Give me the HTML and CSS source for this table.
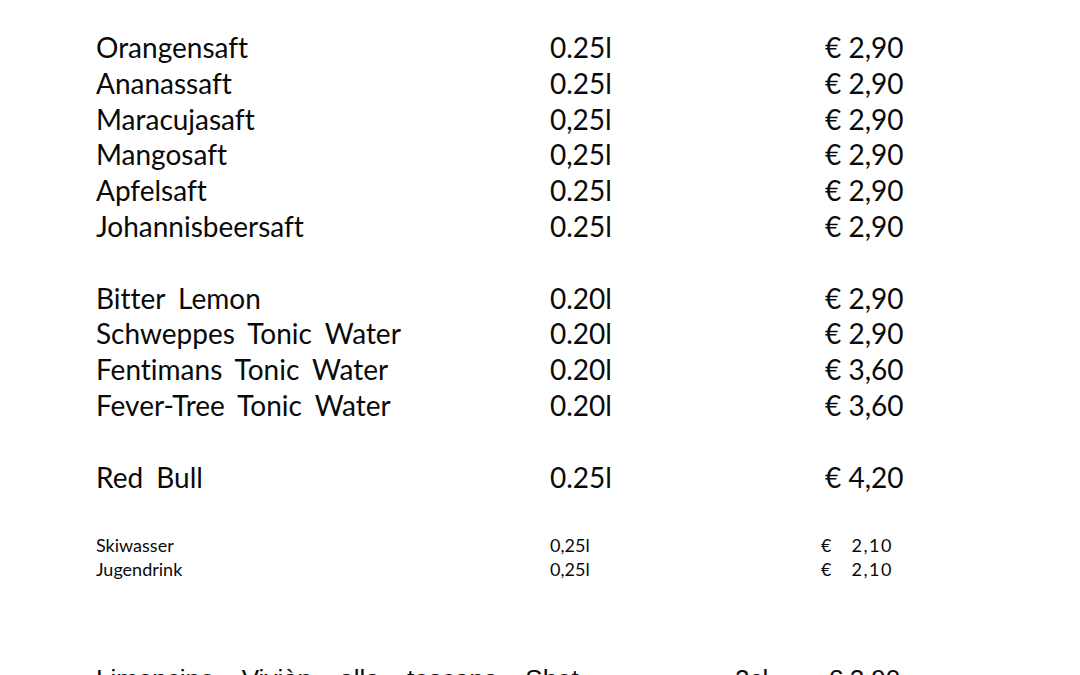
FILE: index.html
```html
<!DOCTYPE html>
<html lang="de">
<head>
<meta charset="utf-8">
<title>Getränkekarte</title>
<link rel="stylesheet" href="styles.css">
</head>
<body>
<main class="menu">
  <section class="group">
    <div class="row"><span class="name">Orangensaft</span><span class="vol">0.25l</span><span class="price">€ 2,90</span></div>
    <div class="row"><span class="name">Ananassaft</span><span class="vol">0.25l</span><span class="price">€ 2,90</span></div>
    <div class="row"><span class="name">Maracujasaft</span><span class="vol">0,25l</span><span class="price">€ 2,90</span></div>
    <div class="row"><span class="name">Mangosaft</span><span class="vol">0,25l</span><span class="price">€ 2,90</span></div>
    <div class="row"><span class="name">Apfelsaft</span><span class="vol">0.25l</span><span class="price">€ 2,90</span></div>
    <div class="row"><span class="name">Johannisbeersaft</span><span class="vol">0.25l</span><span class="price">€ 2,90</span></div>
  </section>
  <section class="group">
    <div class="row"><span class="name">Bitter Lemon</span><span class="vol">0.20l</span><span class="price">€ 2,90</span></div>
    <div class="row"><span class="name">Schweppes Tonic Water</span><span class="vol">0.20l</span><span class="price">€ 2,90</span></div>
    <div class="row"><span class="name">Fentimans Tonic Water</span><span class="vol">0.20l</span><span class="price">€ 3,60</span></div>
    <div class="row"><span class="name">Fever-Tree Tonic Water</span><span class="vol">0.20l</span><span class="price">€ 3,60</span></div>
  </section>
  <section class="group">
    <div class="row"><span class="name">Red Bull</span><span class="vol">0.25l</span><span class="price">€ 4,20</span></div>
  </section>
  <section class="group small">
    <div class="row"><span class="name">Skiwasser</span><span class="vol">0,25l</span><span class="price"><span class="cur">€</span><span class="amt">2,10</span></span></div>
    <div class="row"><span class="name">Jugendrink</span><span class="vol">0,25l</span><span class="price"><span class="cur">€</span><span class="amt">2,10</span></span></div>
  </section>
  <section class="group shot">
    <div class="row"><span class="name">Limoncino Viviàn alla toscana Shot</span><span class="vol">2cl</span><span class="price">€ 2,90</span></div>
  </section>
</main>
</body>
</html>
```
FILE: styles.css
```css
html, body {
  margin: 0;
  padding: 0;
  background: #ffffff;
  overflow: hidden;
}

body {
  width: 1080px;
  height: 675px;
  color: #0a0a0a;
  font-family: "Lato", "Liberation Sans", sans-serif;
  font-variant-ligatures: none;
}

.menu {
  display: flex;
  flex-direction: column;
  gap: 35.8px;
  padding: 30px 0 0 96px;
}

.row {
  display: grid;
  grid-template-columns: 454px 275px auto;
  font-size: 28px;
  line-height: 35.8px;
  white-space: nowrap;
}

.name {
  word-spacing: 6px;
}

.small {
  margin-top: 2px;
}

.small .row {
  font-size: 18px;
  line-height: 24px;
  grid-template-columns: 454px 271px auto;
}

.small .name {
  word-spacing: 0;
}

.small .price {
  display: flex;
  gap: 20px;
}

.small .amt {
  letter-spacing: 1.5px;
}

.shot {
  margin-top: 45px;
}

.shot .row {
  font-family: "Liberation Sans", Arial, sans-serif;
  font-size: 26px;
  grid-template-columns: 639px 93px auto;
}

.shot .name {
  word-spacing: 20px;
}
```
